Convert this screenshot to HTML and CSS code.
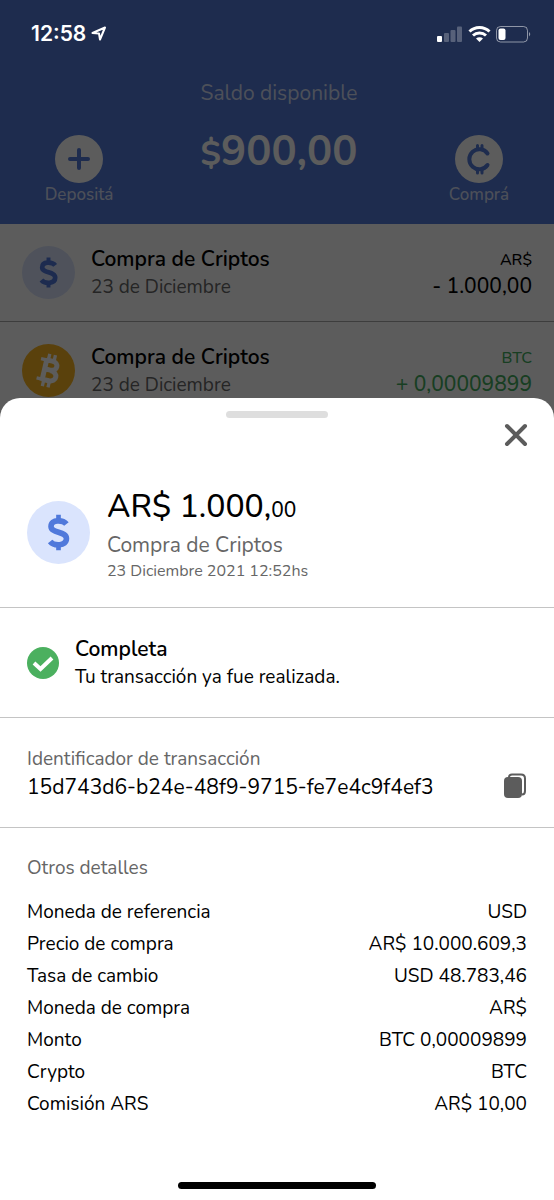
FILE: index.html
```html
<!DOCTYPE html>
<html lang="es">
<head>
<meta charset="utf-8">
<meta name="viewport" content="width=device-width, initial-scale=1">
<title>Detalle de transacción</title>
<link rel="stylesheet" href="styles.css">
</head>
<body>
<svg width="0" height="0" class="defs" aria-hidden="true">
  <symbol id="dollar" viewBox="0 0 24 40">
    <path d="M12 1v6M12 33v6" stroke-width="5"/>
    <path d="M20.500 11C17 6.500 4 5.500 4 13.500C4 21 20.500 18.500 20.500 26.500C20.500 35 7 34.500 3 29.500" stroke-width="6"/>
  </symbol>
</svg>
<div class="app">
  <main class="home">
    <header class="balance">
      <button class="action" type="button">
        <svg class="disc" viewBox="0 0 48 48"><circle cx="24" cy="24" r="24"/><path d="M24 15v18M15 24h18"/></svg>
        <span>Depositá</span>
      </button>
      <div class="total">
        <p class="total-label">Saldo disponible</p>
        <p class="total-value"><span class="currency">$</span>900,00</p>
      </div>
      <button class="action" type="button">
        <svg class="disc" viewBox="0 0 48 48"><circle cx="24" cy="24" r="24"/><path d="M32.500 18.500A10 10 0 1 0 32.500 30"/><path class="ticks" d="M22.500 14.500V10.500M27 14.500V10.500M22.500 34V38M27 34V38"/></svg>
        <span>Comprá</span>
      </button>
    </header>
    <ul class="moves">
      <li class="move">
        <svg class="badge badge-usd" viewBox="0 0 64 64"><circle cx="32" cy="32" r="32"/><use href="#dollar" x="20" y="13" width="24" height="38"/></svg>
        <div class="move-text"><strong>Compra de Criptos</strong><span>23 de Diciembre</span></div>
        <div class="move-amount"><small>AR$</small><span>- 1.000,00</span></div>
      </li>
      <li class="move">
        <svg class="badge badge-btc" viewBox="0 0 64 64"><circle cx="32" cy="32" r="32"/><g transform="rotate(13 32 32)"><path class="bold" d="M27 20H34C43 20 43 31 34 31H27M34 31.500C45 31.500 45 44 35 44H27M27 18V46"/><path d="M20 20H28M20 44H28M29 19V12M36 19V12M29 52V45M36 52V45"/></g></svg>
        <div class="move-text"><strong>Compra de Criptos</strong><span>23 de Diciembre</span></div>
        <div class="move-amount gain"><small>BTC</small><span>+ 0,00009899</span></div>
      </li>
    </ul>
  </main>
  <div class="scrim"></div>
  <div class="status">
    <span class="clock">12:58</span>
    <svg class="location" width="16" height="16" viewBox="0 0 16 16"><path d="M1.500 7L14 1.500L9 13.500L8 7.500Z"/></svg>
    <svg class="signals" width="96" height="18" viewBox="0 0 96 18">
      <g fill="#fff"><rect x="1" y="11" width="5" height="6" rx="1"/><g opacity=".25"><rect x="8" y="8" width="5" height="9" rx="1"/><rect x="14.500" y="5" width="5" height="12" rx="1"/><rect x="21" y="1.500" width="5" height="15.500" rx="1"/></g></g>
      <g fill="none" stroke="#fff" stroke-width="3"><path d="M33.500 6.500C39 1 48 1 53.500 6.500"/><path d="M37 10.500C40.500 7.300 46.500 7.300 50 10.500"/></g>
      <path fill="#fff" d="M40 13.500C42 11.800 45 11.800 47 13.500L43.500 17Z"/>
      <rect x="60.500" y="1.500" width="31" height="15.500" rx="4" fill="none" stroke="#fff" opacity=".5"/>
      <rect x="62.500" y="3.500" width="7" height="11.500" rx="2" fill="#fff"/>
      <path d="M93 7v4.500Q95.500 9.200 93 7Z" fill="#fff" opacity=".5"/>
    </svg>
  </div>
  <section class="sheet" role="dialog" aria-label="Detalle de transacción">
    <div class="grip"></div>
    <button class="close" type="button" aria-label="Cerrar"><svg width="24" height="24" viewBox="0 0 24 24"><path d="M3 3L21 21M21 3L3 21"/></svg></button>
    <div class="block summary">
      <svg class="badge badge-usd" viewBox="0 0 64 64"><circle cx="32" cy="32" r="32"/><use href="#dollar" x="20" y="13" width="24" height="38"/></svg>
      <div>
        <h1>AR$ 1.000,<small>00</small></h1>
        <p class="kind">Compra de Criptos</p>
        <p class="date">23 Diciembre 2021 12:52hs</p>
      </div>
    </div>
    <div class="block state">
      <svg class="check" viewBox="0 0 32 32"><circle cx="16" cy="16" r="16"/><path d="M7 16L13.500 22L25 11"/></svg>
      <div><h2>Completa</h2><p>Tu transacción ya fue realizada.</p></div>
    </div>
    <div class="block ident">
      <div><p class="label">Identificador de transacción</p><p class="hash">15d743d6-b24e-48f9-9715-fe7e4c9f4ef3</p></div>
      <button class="copy" type="button" aria-label="Copiar"><svg width="24" height="28" viewBox="0 0 24 28"><path d="M6 5Q6 2.500 9 2.500H18Q22 2.500 22 6.500V19Q22 22.500 19 22.500"/><rect x="1" y="5" width="18" height="21" rx="4"/></svg></button>
    </div>
    <div class="details">
      <h3 class="label">Otros detalles</h3>
      <table>
        <tr><th scope="row">Moneda de referencia</th><td>USD</td></tr>
        <tr><th scope="row">Precio de compra</th><td>AR$ 10.000.609,3</td></tr>
        <tr><th scope="row">Tasa de cambio</th><td>USD 48.783,46</td></tr>
        <tr><th scope="row">Moneda de compra</th><td>AR$</td></tr>
        <tr><th scope="row">Monto</th><td>BTC 0,00009899</td></tr>
        <tr><th scope="row">Crypto</th><td>BTC</td></tr>
        <tr><th scope="row">Comisión ARS</th><td>AR$ 10,00</td></tr>
      </table>
    </div>
    <div class="home-bar"></div>
  </section>
</div>
</body>
</html>
```
FILE: styles.css
```css
* { box-sizing: border-box; }
body { margin: 0; font-family: Nunito, Lato, sans-serif; color: #000; background: #fff; }
h1, h2, h3, p, ul { margin: 0; padding: 0; font-weight: 400; }
button { border: 0; padding: 0; background: none; font: inherit; color: inherit; display: block; }
svg { display: block; flex: none; fill: none; }
.defs { position: absolute; }
.app { display: grid; min-height: 100vh; }
.app > * { grid-area: 1 / 1; }
.home { background: #fff; }
.scrim { background: rgba(0, 0, 0, .64); }

.status { align-self: start; display: flex; align-items: center; gap: 5px; padding: 22px 22px 0 31px; height: 46px; color: #fff; }
.clock { font: 600 21px/24px Inter, sans-serif; }
.location path { stroke: #fff; stroke-width: 2; stroke-linejoin: round; }
.signals { margin-left: auto; }

.balance { display: flex; justify-content: space-between; align-items: flex-end; height: 224px; padding: 0 30px 17px 34px; background: #537ad8; color: #fff; }
.action { width: 90px; font-size: 17px; font-weight: 500; line-height: 24px; color: rgba(255, 255, 255, .75); }
.disc { width: 48px; height: 48px; margin: 0 auto; }
.disc circle { fill: #fff; }
.disc path { stroke: #537ad8; stroke-width: 4; stroke-linecap: round; }
.disc .ticks { stroke-width: 3; }
.total { text-align: center; }
.total-label { font-size: 21px; line-height: 28px; color: rgba(255, 255, 255, .75); }
.total-value { font-size: 42px; line-height: 52px; font-weight: 700; margin: 19px 0 27px; }
.currency { font-size: 34px; }

.moves { list-style: none; }
.move { display: flex; align-items: center; gap: 16px; height: 98px; padding: 0 22px; border-bottom: 1px solid #aaa; }
.badge { width: 53px; height: 53px; }
.badge-usd circle { fill: #dae4fd; }
.badge-usd use { stroke: #5079db; }
.badge-btc circle { fill: #f9b522; }
.badge-btc path { stroke: #fff; stroke-width: 4; }
.badge-btc .bold { stroke-width: 6; }
.move-text { flex: 1; display: grid; line-height: 28px; }
.move-text strong { font-size: 21px; font-weight: 600; }
.move-text span { font-size: 19px; color: #666; }
.move-amount { display: grid; text-align: right; font-size: 21px; font-weight: 500; line-height: 26px; }
.move-amount small { font-size: 16px; }
.gain { color: #43ad5e; }

.sheet { position: relative; display: flex; flex-direction: column; margin-top: 398px; padding-top: 13px; border-radius: 20px 20px 0 0; background: #fff; }
.grip { width: 102px; height: 7px; margin: 0 auto; border-radius: 4px; background: #dedede; }
.close { align-self: flex-end; margin: 5px 26px 0 0; }
.close path { stroke: #5c5c5c; stroke-width: 4; stroke-linecap: round; }
.block { display: flex; align-items: center; padding: 0 27px; height: 110px; border-bottom: 1px solid #c4c4c4; }
.summary { height: 161px; gap: 17px; padding-top: 10px; }
.summary .badge { width: 63px; height: 63px; }
h1 { font-size: 32px; font-weight: 500; line-height: 40px; padding-top: 4px; }
h1 small { font-size: 21px; }
.kind { font-size: 21px; line-height: 30px; color: #666; }
.date { font-size: 16px; line-height: 22px; color: #666; }
.state { gap: 16px; }
.check { width: 32px; height: 32px; }
.check circle { fill: #4bb05f; }
.check path { stroke: #fff; stroke-width: 4; }
h2 { font-size: 21px; line-height: 28px; font-weight: 600; }
.state p { font-size: 19px; line-height: 28px; }
.ident { justify-content: space-between; }
.label { font-size: 19px; line-height: 28px; color: #666; }
.hash { font-size: 21px; line-height: 28px; }
.copy { align-self: flex-end; margin-bottom: 27px; }
.copy rect { fill: #5c5c5c; }
.copy path { stroke: #5c5c5c; stroke-width: 2; }
.details { padding: 26px 27px 0; }
table { width: 100%; margin-top: 14px; border-collapse: collapse; font-size: 19px; line-height: 32px; }
th, td { padding: 0; font-weight: 400; text-align: left; }
td { text-align: right; }
.home-bar { width: 198px; height: 7px; margin: auto auto 11px; border-radius: 4px; background: #000; }
```
